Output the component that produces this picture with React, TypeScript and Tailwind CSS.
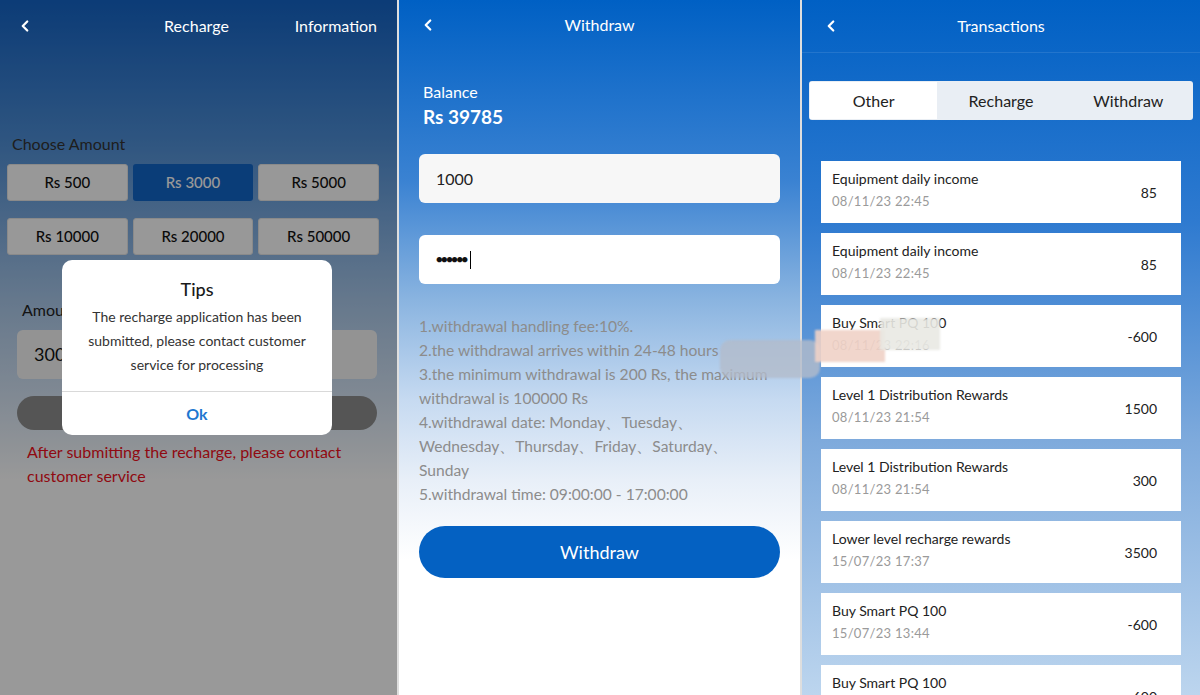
import { ChevronLeft } from "lucide-react";

const amounts = ["Rs 500", "Rs 3000", "Rs 5000", "Rs 10000", "Rs 20000", "Rs 50000"];

const rules = [
  "1.withdrawal handling fee:10%.",
  "2.the withdrawal arrives within 24-48 hours",
  "3.the minimum withdrawal is 200 Rs, the maximum withdrawal is 100000 Rs",
  "4.withdrawal date: Monday、Tuesday、Wednesday、Thursday、Friday、Saturday、Sunday",
  "5.withdrawal time: 09:00:00 - 17:00:00",
];

const records = [
  { title: "Equipment daily income", date: "08/11/23 22:45", amount: "85" },
  { title: "Equipment daily income", date: "08/11/23 22:45", amount: "85" },
  { title: "Buy Smart PQ 100", date: "08/11/23 22:16", amount: "-600" },
  { title: "Level 1 Distribution Rewards", date: "08/11/23 21:54", amount: "1500" },
  { title: "Level 1 Distribution Rewards", date: "08/11/23 21:54", amount: "300" },
  { title: "Lower level recharge rewards", date: "15/07/23 17:37", amount: "3500" },
  { title: "Buy Smart PQ 100", date: "15/07/23 13:44", amount: "-600" },
  { title: "Buy Smart PQ 100", date: "15/07/23 13:40", amount: "-600" },
];

function RechargePanel() {
  return (
    <div className="relative w-[397px] h-full overflow-hidden bg-[linear-gradient(180deg,#1464c6_0px,#4e8ed6_140px,#a9c8ea_300px,#d8e6f6_400px,#ffffff_480px)]">
      <div className="h-[52px]" />

      <div className="mt-[82px] pl-[12px] text-[16px] leading-[20px] text-[#333]">Choose Amount</div>
      <div className="mt-[10px] grid grid-cols-3 gap-x-[5px] gap-y-[17px] pl-[7px] pr-[18px]">
        {amounts.map((a, i) => (
          <div
            key={a}
            className={`h-[37px] rounded-[3px] flex items-center justify-center text-[15px] font-medium ${
              i === 1 ? "bg-[#1266c8] text-white" : "bg-[#fdfdfd] border border-[#e6e6e6] text-[#111]"
            }`}
          >
            {a}
          </div>
        ))}
      </div>

      <div className="mt-[45px] pl-[22px] text-[16px] leading-[20px] text-[#222]">Amount</div>
      <div className="mt-[10px] mx-[17px] w-[360px] h-[49px] rounded-[6px] bg-[#f6f6f6] flex items-center px-[17px] text-[18px] text-[#111]">
        3000
      </div>
      <div className="mt-[17px] mx-[17px] w-[360px] h-[34px] rounded-full bg-[#8e8e8e]" />
      <div className="mt-[10px] pl-[27px] pr-[20px] text-[16px] leading-[24px] text-[#f01020]">
        After submitting the recharge, please contact customer service
      </div>

      <div className="absolute inset-0 bg-black/40" />

      {/* header stays bright above the mask */}
      <div className="absolute inset-x-0 top-0 grid grid-cols-[1fr_auto_1fr] items-center h-[52px] pl-[16px] pr-[20px] text-white text-[16px]">
        <ChevronLeft size={18} strokeWidth={3} />
        <span>Recharge</span>
        <span className="justify-self-end">Information</span>
      </div>

      <div className="absolute left-[62px] top-[260px] w-[270px] rounded-[10px] bg-white text-center">
        <div className="pt-[17px] text-[18px] leading-[24px] font-medium text-[#1a1a1a]">Tips</div>
        <div className="pt-[4px] pb-[14px] px-[14px] text-[14px] leading-[24px] text-[#333]">
          The recharge application has been submitted, please contact customer service for processing
        </div>
        <div className="h-[44px] border-t border-[#d9d9d9] flex items-center justify-center text-[16px] font-bold text-[#1e78d0]">
          Ok
        </div>
      </div>
    </div>
  );
}

function WithdrawPanel() {
  return (
    <div className="w-[401px] h-full overflow-hidden bg-[linear-gradient(180deg,#0060c4_0px,#3a82d2_180px,#8ab4e0_300px,#c6daf1_400px,#e8eff8_480px,#ffffff_560px)]">
      <div className="relative flex items-center justify-center h-[50px] text-white text-[16px]">
        <ChevronLeft size={18} strokeWidth={3} className="absolute left-[20px]" />
        <span>Withdraw</span>
      </div>

      <div className="px-[20px]">
        <div className="pt-[32px] pl-[4px] text-white">
          <div className="text-[16px] leading-[20px]">Balance</div>
          <div className="mt-[2px] text-[19px] leading-[26px] font-bold">Rs 39785</div>
        </div>

        <div className="mt-[24px] h-[49px] rounded-[6px] bg-[#f7f7f7] flex items-center px-[17px] text-[16px] text-[#222]">
          1000
        </div>
        <div className="mt-[32px] h-[49px] rounded-[6px] bg-white flex items-center px-[17px] text-[#111]">
          <span className="text-[11px] tracking-[-1.5px]">●●●●●●</span>
          <span className="ml-[3px] w-[1px] h-[18px] bg-black" />
        </div>

        <div className="mt-[30px] w-[356px] text-[15.6px] leading-[24px] text-[#8c8c8c]">
          {rules.map((r) => (
            <div key={r}>{r}</div>
          ))}
        </div>

        <div className="mt-[20px] h-[52px] rounded-full bg-[#0461c2] flex items-center justify-center text-white text-[18px]">
          Withdraw
        </div>
      </div>
    </div>
  );
}

function TransactionsPanel() {
  return (
    <div className="w-[398px] h-full overflow-hidden bg-[linear-gradient(180deg,#0060c4_0px,#2e7ad0_220px,#7eaadc_440px,#bcd5ee_695px)]">
      <div className="relative flex items-center justify-center h-[53px] border-b border-white/10 text-white text-[16px]">
        <ChevronLeft size={18} strokeWidth={3} className="absolute left-[20px]" />
        <span>Transactions</span>
      </div>

      <div className="mt-[28px] mx-[7px] h-[39px] rounded-[3px] bg-[#e9eef4] p-[1px] grid grid-cols-3 text-[16px] text-[#222]">
        <div className="bg-white flex items-center justify-center">Other</div>
        <div className="flex items-center justify-center">Recharge</div>
        <div className="flex items-center justify-center">Withdraw</div>
      </div>

      <div className="mt-[41px] px-[19px] flex flex-col gap-[10px]">
        {records.map((r, i) => (
          <div key={i} className="h-[62px] shrink-0 bg-white flex items-center justify-between pl-[11px] pr-[24px]">
            <div className="mb-[4px]">
              <div className="text-[14px] leading-[18px] text-[#222]">{r.title}</div>
              <div className="mt-[4px] text-[13px] leading-[18px] text-[#9a9a9a] tracking-[0.3px]">{r.date}</div>
            </div>
            <div className="text-[14px] text-[#222]">{r.amount}</div>
          </div>
        ))}
      </div>
    </div>
  );
}

export default function App() {
  return (
    <div className="relative w-[1200px] h-[695px] overflow-hidden flex gap-[2px] bg-[#dedede] font-['Lato',sans-serif]">
      <RechargePanel />
      <WithdrawPanel />
      <TransactionsPanel />

      {/* smudge that sits over the screenshot seam */}
      <div className="pointer-events-none absolute left-[720px] top-[340px] w-[100px] h-[38px] rounded-[10px] bg-[#b3bccb]/80 blur-[1px]" />
      <div className="pointer-events-none absolute left-[815px] top-[330px] w-[70px] h-[32px] bg-[#efd2c6]/90 blur-[1px]" />
      <div className="pointer-events-none absolute left-[880px] top-[318px] w-[60px] h-[32px] bg-[#e9e9e3]/90 blur-[1px]" />
    </div>
  );
}
